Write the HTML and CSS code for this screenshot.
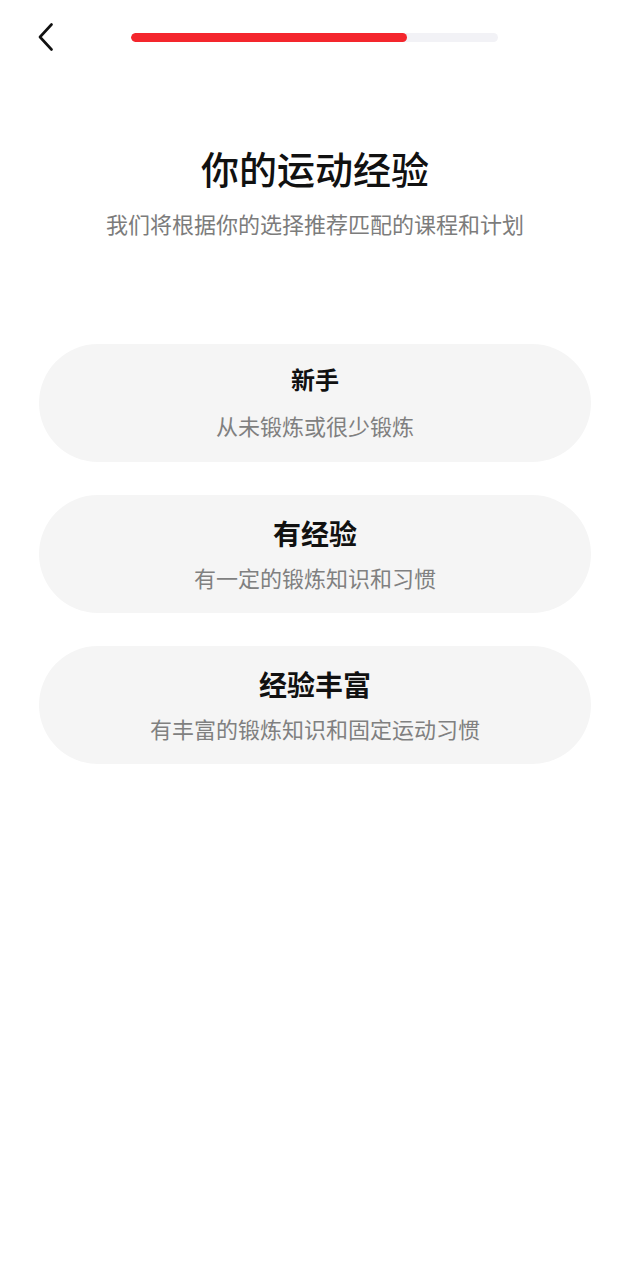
FILE: index.html
```html
<!DOCTYPE html>
<html lang="zh-CN">
<head>
  <meta charset="UTF-8">
  <title>你的运动经验</title>
  <link rel="stylesheet" href="styles.css">
</head>
<body>

  <div class="topbar">
    <a class="btn-back" href="#">
      <svg width="15" height="28" viewBox="0 0 15 28">
        <path d="M13.5 1.5 L2 14 L13.5 26.5" fill="none" stroke="#111" stroke-width="2.6" stroke-linecap="round" stroke-linejoin="round"/>
      </svg>
    </a>
    <div class="progress">
      <div class="progress-fill" style="width: 75.2%;"></div>
    </div>
  </div>

  <div class="intro">
    <h1>你的运动经验</h1>
    <p>我们将根据你的选择推荐匹配的课程和计划</p>
  </div>

  <div class="options">
    <div class="option">
      <div class="option-title small">新手</div>
      <div class="option-desc">从未锻炼或很少锻炼</div>
    </div>
    <div class="option">
      <div class="option-title">有经验</div>
      <div class="option-desc">有一定的锻炼知识和习惯</div>
    </div>
    <div class="option">
      <div class="option-title">经验丰富</div>
      <div class="option-desc">有丰富的锻炼知识和固定运动习惯</div>
    </div>
  </div>

</body>
</html>
```

FILE: styles.css
```css
body {
  margin: 0;
  background: #fff;
  font-family: "Noto Sans CJK SC", "Noto Sans", sans-serif;
  color: #111;
}

.topbar {
  display: flex;
  align-items: center;
  padding: 23px 0 0 38px;
}

.btn-back {
  display: block;
  width: 15px;
  height: 28px;
}

.btn-back svg {
  display: block;
}

.progress {
  margin-left: 78px;
  width: 367px;
  height: 9px;
  border-radius: 5px;
  background: #f2f2f6;
  overflow: hidden;
}

.progress-fill {
  height: 100%;
  border-radius: 5px;
  background: #f4262d;
}

.intro {
  margin-top: 93px;
  text-align: center;
}

.intro h1 {
  margin: 0;
  font-size: 38px;
  line-height: 48px;
  font-weight: 500;
  color: #111;
}

.intro p {
  margin: 16px 0 0;
  font-size: 22px;
  line-height: 30px;
  color: #7c7c7c;
}

.options {
  display: flex;
  flex-direction: column;
  gap: 33px;
  margin: 106px 39px 0;
}

.option {
  height: 118px;
  box-sizing: border-box;
  padding-top: 21px;
  border-radius: 59px;
  background: #f5f5f5;
  display: flex;
  flex-direction: column;
  align-items: center;
  gap: 12px;
}

.option-title {
  font-size: 28px;
  line-height: 34px;
  font-weight: 700;
  color: #111;
}

.option-title.small {
  font-size: 24px;
  line-height: 28px;
  margin-bottom: 5px;
}

.option-desc {
  font-size: 22px;
  line-height: 30px;
  color: #808080;
}
```
